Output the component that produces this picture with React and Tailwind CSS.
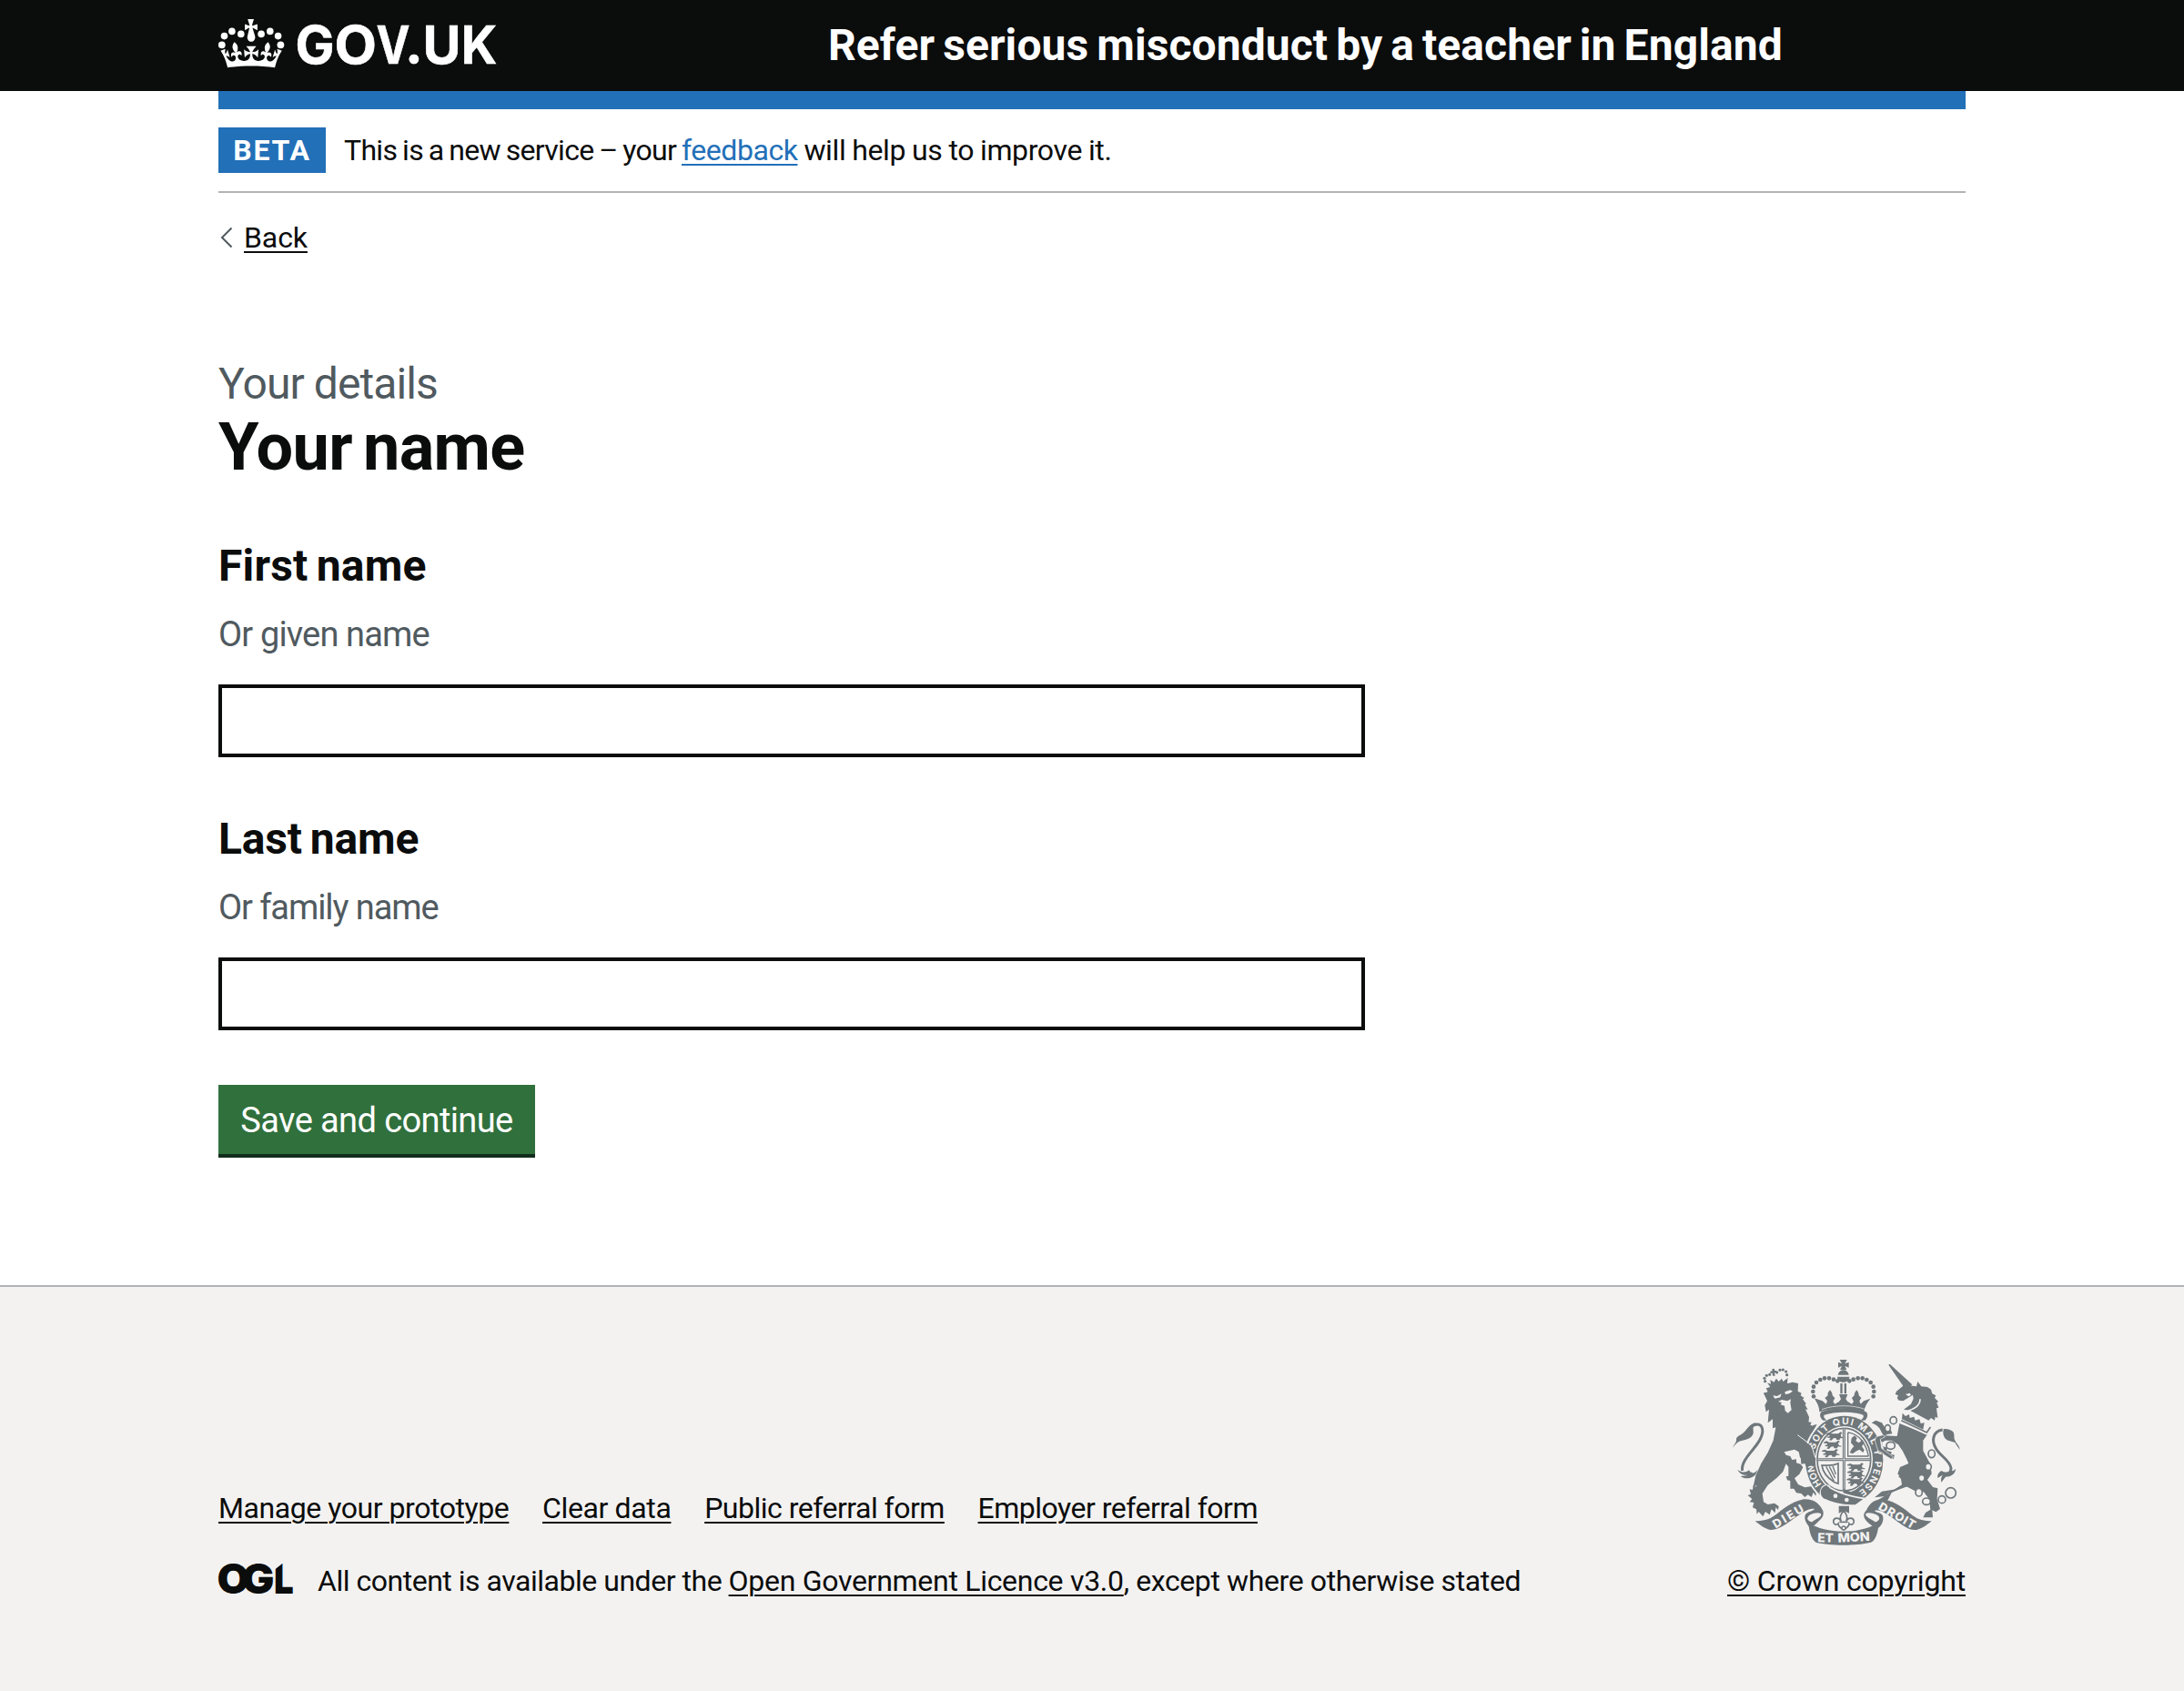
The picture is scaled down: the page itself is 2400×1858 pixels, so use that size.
import React from "react";

function Crown() {
  return (
    <g fill="#fff">
      <circle cx="3.8" cy="49.3" r="3.9" />
      <circle cx="6.5" cy="39.6" r="3.8" />
      <circle cx="14.9" cy="34.4" r="3.8" />
      <circle cx="24.8" cy="37.4" r="3.8" />
      <circle cx="47.1" cy="37.4" r="3.8" />
      <circle cx="56.8" cy="34.4" r="3.8" />
      <circle cx="65.6" cy="39.6" r="3.8" />
      <circle cx="68.4" cy="49.3" r="3.9" />
      <path d="M37.6 30.6l5.3 2.7v-6.7l-5.3 1.6-.6-.6 2-6.6h-6.8l2 6.6-.6.6-4.5-1.6v6.7l4.5-2.7.4.5-2 8.3c-.9 3 1.1 6.4 4 6.4s5.1-3 4.2-6.4l-2.6-8.3z" />
      <g transform="translate(2.4 10.6) scale(1.06)">
        <path d="M37,37.9s-3.4,3.8-4.1,6.1c2.2,0,4.2-.5,6.4-2.8l-.7,8.5c-2-2.8-4.4-4.1-5.7-3.8.1,3.1.5,6.7,5.8,7.2,3.7.3,6.7-1.5,7-3.8.4-2.6-2-4.3-3.7-1.6-1.4-4.5,2.4-6.1,4.9-3.2-1.9-4.5-1.8-7.7,2.4-10.9,3,4,2.6,7.3-1.2,11.1,2.4-1.3,6.2,0,4,4.6-1.2-2.8-3.7-2.2-4.2.2-.3,1.7.7,3.7,3,4.2,1.9.3,4.7-.9,7-5.9-1.3,0-2.4.7-3.9,1.7l2.4-8c.6,2.3,1.4,3.7,2.2,4.5.6-1.6.5-2.8,0-5.3l5,1.8c-2.6,3.6-5.2,8.7-7.3,17.5-7.4-1.1-15.7-1.7-24.5-1.7h0c-8.8,0-17.1.6-24.5,1.7-2.1-8.9-4.7-13.9-7.3-17.5l5-1.8c-.5,2.5-.6,3.7,0,5.3.8-.8,1.6-2.3,2.2-4.5l2.4,8c-1.5-1-2.6-1.7-3.9-1.7,2.3,5,5.2,6.2,7,5.9,2.3-.4,3.3-2.4,3-4.2-.5-2.4-3-3.1-4.2-.2-2.2-4.6,1.6-6,4-4.6-3.7-3.7-4.2-7.1-1.2-11.1,4.2,3.2,4.3,6.4,2.4,10.9,2.5-2.8,6.3-1.3,4.9,3.2-1.8-2.7-4.1-1-3.7,1.6.3,2.3,3.3,4.1,7,3.8,5.4-.5,5.7-4.2,5.8-7.2-1.3-.2-3.7,1-5.7,3.8l-.7-8.5c2.2,2.3,4.2,2.7,6.4,2.8-.7-2.3-4.1-6.1-4.1-6.1h10.6" />
      </g>
    </g>
  );
}

function Logo() {
  return (
    <svg className="block h-[100px] w-[310px]" viewBox="0 0 310 100" aria-label="GOV.UK">
      <Crown />
      <g fill="#fff" stroke="#fff" strokeWidth="0.6" className="font-['Inter',sans-serif] text-[58px] font-bold">
        <text x="84.5" y="70" textLength="43" lengthAdjust="spacingAndGlyphs">G</text>
        <text x="127.5" y="70" textLength="46.5" lengthAdjust="spacingAndGlyphs">O</text>
        <text x="173.5" y="70" textLength="37" lengthAdjust="spacingAndGlyphs">V</text>
        <text x="207.4" y="70" className="font-['Lato',sans-serif] text-[62px] font-black">.</text>
        <text x="224.5" y="70" textLength="42" lengthAdjust="spacingAndGlyphs">U</text>
        <text x="266.8" y="70" textLength="39.5" lengthAdjust="spacingAndGlyphs">K</text>
      </g>
    </svg>
  );
}

function OglLogo() {
  return (
    <svg className="block h-[36px] w-[82px] overflow-visible" viewBox="0 0 82 36" aria-label="OGL">
      <g fill="#0b0c0c" className="font-['Inter',sans-serif] text-[45px] font-black">
        <text x="-1.4" y="33.9" textLength="35.8" lengthAdjust="spacingAndGlyphs">O</text>
        <text x="25.6" y="33.9" textLength="36" lengthAdjust="spacingAndGlyphs">G</text>
        <text x="61" y="33.9" textLength="21.7" lengthAdjust="spacingAndGlyphs">L</text>
      </g>
      <path d="M62 0h9.5L62 7.5z" fill="#f3f2f1" />
    </svg>
  );
}

const G = "#6f777b";
const BG = "#f3f2f1";

const crownDots = [
  [339, 163], [337, 147], [339, 131], [348, 117], [361, 108], [375, 103], [390, 103], [405, 107], [418, 112],
];

function LionCharge({ x, y }) {
  return (
    <path
      transform={`translate(${x} ${y})`}
      d="M-8 2l10-4 8 4h22l8-6 6 4-6 4 2 8 8 2v3l-10-1-4 6h-9l-3-6-8 1-6 7-8-1 5-8-9 1-2-4 8-2-1-4-11-1z"
    />
  );
}

function Crest() {
  return (
    <svg className="block h-[204px] w-[250px]" viewBox="72 42 750 612" aria-label="Royal coat of arms">
      <defs>
        <path id="motto" d="M339 373 A101 117 0 1 1 484 478" />
        <path id="honi" d="M375 463 A101 117 0 0 1 339 373" />
      </defs>

      {/* lion */}
      <g fill={G}>
        <path d="M174 152l14-4-6-12 88-20 18 4-1 26 12 6-3 8 12 8-5 4 12 16-5 1 10 18-8-2 12 26-2 24 22 8-18 38-8 20-16-6 14 12 12 8 20 40-2 16 8 18-8-6-2 12-8-10-6 8-4-12-6 4 0-12-12-4-2-14-10 2 0-12-12 2-6-12-20-6 28-8-24 0 10 20 24 14 8 22-12 22-16 14 12 20 22 10 24-4 16 8 8 12-10-4-2 16-8-12-6 16-12-8-10 8-12-12-16-2-8-14-12 0 0-26-10-2-4-12 8-2 0-30-8-10-10 26-20 20-30 24-18 28 4 28 14 8 22-4 14 10-2 12-8-8-2 18-12-12-6 18-14-10-8 16-14-16-6 8-2-16-12-6 4-16-14-2 8-10-14-12 10-4-4-16 10 2 2-16 8 6 10-12 16 2 12-36 24-36 16-56 18-42-28-2 18-10-22-6 12-16-16-4 12-18-10-4 10-14z" />
        <path d="M174 152l12 26-8 14 4 22 10-8-4 44 16-12 0 30 60-20-10-86-30-20z" />
        <path d="M204 240l10 26-8 42-18 40-22 36-18 40-8 36 40-10 34-40 8-26 0-22 18-12 28-4 34 4 40 22-14-44-18-28 22-52z" />
        <path d="M98 426c20 0 30-6 34-14 6 6 14 4 22-8-2 12-8 20-16 24-12 6-28 8-40-2zM88 404c12 10 26 12 38 2l8 12c-16 8-36 6-46-14z" />
        <path d="M72 332c6-14 14-18 12-30 4-10 20-12 32-28 8-10 16-22 34-25-16 16-8 22-10 36-4 16-22 20-38 24-12 2-20 10-30 23z" />
      </g>
      <path d="M120 280c12-22 38-34 48-16 8 18-6 46-26 70-20 26-42 48-38 74" fill="none" stroke={G} strokeWidth="9" />
      <path d="M205 160l14 2 14-8-4 12-18 4zM244 148l18-6 8 4-12 8-12 2zM222 180l12-6 18 4 12-6-2 12 4 24-12 10-9-8-2-16-13-4 4-7z" fill={BG} />
      <path d="M242 346l34-8 14 8 4 18 14 20-2 14-10-12-14-4 0-12-14 2-6-12-14-4z" fill={BG} />
      {/* lion's crown */}
      <path d="M186 118l12 4-2-14 12 8 8-12 8 10 10-10 4 10 16-12-2 16-52 20zM190 134l62-18 2 8-62 18z" fill={G} />
      <path d="M202 72h8v6h7v7h-7l2 10h-8l-1-9-7 1v-7l7-1z" fill={G} />
      <g fill={G}>
        {[[179, 113], [177, 103], [184, 94], [194, 91], [218, 84], [228, 76], [238, 75], [248, 81], [251, 92]].map(([x, y]) => (
          <circle key={x} cx={x} cy={y} r="4.8" />
        ))}
      </g>

      {/* unicorn */}
      <g fill={G}>
        <path d="M586 59l4-3 74 68-22 16z" />
        <path d="M650 124l14 4 14 2 4-16 12 16 20 2 12 8 4 14 12 6-4 8 12 12-5 4 6 16-7 2 4 32-8-4-2 12-12-8-8 8-60-32-22-4 24-18 8-18-2-12-16 10-16 10-14-2-6-8 4-8-10-4 4-10 20-16 14-16z" />
        <path d="M622 252l92 36-14 20 0 34 24 44 4 32-14 20 18 24 16 4-2 36 10 32-14 10-12-6 2 24-18 0-14 0 8-16 16-10-4-34-18-24-30-4-30-16-46 22-12 24-42 12 6-10 24-14 18-12 40-26-4-24-10-12 8-22 28-12-6-14-14-28-14-20-22-14-20 0-12 6 4 14 14 4-2 10 16 4-2 8 12 2-4 14-16-10-26-16-8-34-10-6 28-12 44 2z" />
        <path d="M618 426l28 28-44 16-38 6-24 20 34-4 12-10 62-22 40-20-10-30z" />
        <path d="M530 250l14-8 20 8 14 22 16 2 4 12-16 2-12 6-14-26-10-10z" />
        <path d="M820 340c-4-12-12-16-14-24-14-6-30-6-36-18-4-10-6-18-2-26-8-2-18 4-22 10 10-14 34-16 48-6 14 8 4 22 12 34 4 10 16 16 14 30zM808 402c-4 18-16 26-34 26l-14 18c-2-12 0-16 4-24l-16 10c-2-14 6-20 12-24 6 6 30 8 48-6z" />
      </g>
      <path d="M764 273c-34 5-36 37-22 61 12 24 48 40 50 66 0 14-8 20-20 22" fill="none" stroke={G} strokeWidth="9" />
      <path d="M690 172c0 22-18 32-50 42" fill="none" stroke={BG} strokeWidth="5" />
      <path d="M642 156l14-4 4 6-8 5zM606 187l14-4-6 6z" fill={BG} />
      {/* collar */}
      <path d="M630 214l96 46-14 30-92-42z" fill={BG} />
      <path d="M628 242l84 40 12-18" fill="none" stroke={G} strokeWidth="5" />
      <path d="M630 238l2-20 10 10 12-6 2 12 14-4 4 12 14-4 4 14 12-2-4 22z" fill={G} />
      {/* chain */}
      <g fill={BG} stroke={G} strokeWidth="5">
        <ellipse cx="602" cy="242" rx="11" ry="12" />
        <ellipse cx="583" cy="268" rx="9" ry="11" />
        <ellipse cx="593" cy="325" rx="14" ry="12" />
        <ellipse cx="728" cy="352" rx="11" ry="13" />
        <ellipse cx="717" cy="395" rx="10" ry="11" />
        <ellipse cx="695" cy="432" rx="10" ry="11" />
        <ellipse cx="686" cy="479" rx="11" ry="13" />
        <ellipse cx="711" cy="509" rx="13" ry="11" />
        <ellipse cx="762" cy="503" rx="12" ry="12" />
        <circle cx="791" cy="481" r="17" />
      </g>

      {/* garter and shield */}
      <ellipse cx="440" cy="373" rx="134" ry="151" fill={BG} />
      <path d="M330 264c6-6 14-10 20-8l-18 28z" fill={G} />
      <ellipse cx="440" cy="373" rx="128" ry="146" fill={G} />
      <ellipse cx="439" cy="371" rx="95" ry="110" fill={BG} />
      <ellipse cx="439" cy="371" rx="88" ry="103" fill="none" stroke={G} strokeWidth="5" />
      <path d="M439 268v206M352 371h174" stroke={G} strokeWidth="9" fill="none" />
      <path d="M439 268v206M352 371h174" stroke={BG} strokeWidth="2" fill="none" />
      <g fill={G}>
        <LionCharge x={388} y={284} /><LionCharge x={380} y={312} /><LionCharge x={374} y={340} />
        <LionCharge x={458} y={386} /><LionCharge x={458} y={410} /><LionCharge x={456} y={434} />
        <path d="M464 300l10-8 8 8-4 10 10 6 12-10 6 10-8 12 8 12-4 8-12-10-12 6-10 8-10-4 8-14 6-6-10-12z" />
      </g>
      <path d="M452 282v78h68M452 282c34 4 60 34 68 78" fill="none" stroke={G} strokeWidth="4" />
      <path d="M366 390c20 0 34 4 54-6v66l-12-4c-20-12-38-30-42-56z" fill={BG} stroke={G} strokeWidth="5" />
      <path d="M380 394l26 48M391 394l19 38M402 392l10 28" stroke={G} strokeWidth="4" fill="none" />
      <path d="M438 468l24 10c12-4 22-10 30-20l14 18-30 24-40-18z" fill={G} />
      <g fill={BG} className="font-['Inter',sans-serif] text-[31px] font-bold">
        <text>
          <textPath href="#motto" startOffset="34" textLength="430" lengthAdjust="spacing">SOIT QUI MAL Y PENSE</textPath>
        </text>
        <text>
          <textPath href="#honi" startOffset="14">HON</textPath>
        </text>
      </g>
      {/* buckle strap */}
      <path d="M364 470c6-16 24-18 30-6 34 20 72 30 114 36l-30 22c-40 2-76-6-108-22-8-8-12-18-6-30z" fill={G} stroke={BG} strokeWidth="5" />
      <path d="M384 458c-14 2-22 14-18 26 2 10 10 14 16 12" fill="none" stroke={G} strokeWidth="6" />
      <circle cx="411" cy="491" r="7" fill={BG} /><circle cx="448" cy="504" r="7" fill={BG} />

      {/* lion and unicorn paws over the garter */}
      <path d="M286 292l44 34 16 44-6 26-14-8-8 14-8-18-12 2-2-28z" fill={G} />
      <path d="M286 290l46 34 12 40" fill="none" stroke={BG} strokeWidth="3" />
      <path d="M545 296l22-6 8 6-16 8 4 30 38 28-6 8-22-14-8-8-14-6-10-34z" fill={G} stroke={BG} strokeWidth="2" />

      {/* imperial crown */}
      <g fill={G}>
        {crownDots.map(([x, y]) => (
          <React.Fragment key={`${x}-${y}`}>
            <circle cx={x} cy={y} r="7" />
            <circle cx={875 - x} cy={y} r="7" />
          </React.Fragment>
        ))}
        <path d="M425 42h24l-7 13 13-5v18l-13-5 6 12h-22l6-12-12 5V50l12 5z" />
        <path d="M419 92c2-10 10-16 18-16s16 6 18 16zM417 98h40c0 12-10 18-20 18s-20-6-20-18zM427 120h7v34h-7zM440 120h7v34h-7z" />
        <path d="M346 170l22 8 12 10 4-10-8-10 10-8c-2-8 2-12 7-18 5 6 8 10 8 18l8 8-6 12 6 8 14-8 6-8-6-16h28l-6 16 6 8 14 8 6-8-6-12 8-8c0-8 3-12 8-18 4 6 7 10 7 18l8 8-6 10 4 10 10-10 22-8c-10 14-20 28-20 44-46-14-102-14-148 0 0-18-8-30-16-44z" />
        <path d="M364 214c40-16 108-16 148 0 8 8 4 22-4 28h-14c6-6 12-10 8-18-36-12-92-12-128 0-4 8 2 12 8 18h-12c-8-6-14-18-6-28z" />
      </g>
      <path d="M366 206c42-16 102-16 144 0" fill="none" stroke={BG} strokeWidth="2" />

      {/* fleur-de-lis pendant */}
      <path d="M422 524h34v24l-17-8-17 8z" fill={G} />
      <path d="M438 540c-12 14-14 24-8 34-8-14-24-12-26 0 0 12 10 14 16 8 0 10 6 14 18 20 12-6 18-10 18-20 6 6 16 4 16-8-2-12-18-14-26 0 6-10 4-20-8-34z" fill={BG} stroke={G} strokeWidth="5" />
      <path d="M424 577h28" stroke={G} strokeWidth="5" />
      <circle cx="438" cy="597" r="6" fill={BG} stroke={G} strokeWidth="4" />

      {/* ribbon */}
      <g fill={G}>
        <path d="M146 574c22 0 46-4 64-18 28-20 50-44 96-54 34-2 52 14 64 38 6 22-12 30-26 46l-16 10c-14-14-22-30-16-44 8-10 24-10 30-18-18-4-36 10-54 22-28 18-58 48-92 47-20-4-36-18-50-29z" />
        <path d="M728 574c-22 0-44-4-62-18-26-20-50-44-96-54-30-2-46 14-56 34-18 22-6 32 8 46l24 18c20-10 26-32 20-46-8-8-20-8-26-14 20-6 36 10 54 20 28 18 54 46 84 43 20-4 36-18 50-29z" />
        <path d="M322 580c60 38 170 38 232-2-2 28-8 58-26 66-50 12-132 12-182 0-14-10-22-36-24-64z" />
      </g>
      <path d="M352 544c-18 0-34 8-36 20 0 8 8 14 18 16 10-12 34-16 32-28 0-6-6-8-14-8z" fill={BG} stroke={G} strokeWidth="5" />
      <path d="M520 544c18 0 38 8 38 20 0 8-8 14-16 16-12-10-34-16-34-28 0-6 4-8 12-8z" fill={BG} stroke={G} strokeWidth="5" />
      <g fill={BG} className="font-['Inter',sans-serif] font-extrabold">
        <text transform="translate(214 599) rotate(-31)" className="text-[39px]" textLength="112">DIEU</text>
        <text transform="translate(352 643) rotate(1)" className="text-[41px]" textLength="52">ET</text>
        <text transform="translate(419 644) rotate(-3)" className="text-[41px]" textLength="106" lengthAdjust="spacingAndGlyphs">MON</text>
        <text transform="translate(550 534) rotate(30)" className="text-[39px]" textLength="134">DROIT</text>
      </g>
    </svg>
  );
}

function Field({ id, label, hint, labelClass, hintClass }) {
  return (
    <div className="flex flex-col">
      <label htmlFor={id} className={`text-[48px] leading-[60px] font-bold ${labelClass}`}>{label}</label>
      <div className={`mt-5 text-[38px] leading-[50px] text-[#505a5f] ${hintClass}`}>{hint}</div>
      <input id={id} type="text" className="mt-[30px] h-20 w-[1260px] border-4 border-[#0b0c0c] bg-white px-2 text-[38px] outline-none" />
    </div>
  );
}

const link = "underline decoration-2 underline-offset-[4px]";

const footerLinks = [
  { text: "Manage your prototype", cls: "tracking-[-0.44px]" },
  { text: "Clear data", cls: "tracking-[-0.37px]" },
  { text: "Public referral form", cls: "tracking-[-0.5px]" },
  { text: "Employer referral form", cls: "tracking-[-0.5px]" },
];

export default function App() {
  return (
    <div className="flex min-h-[1858px] w-[2400px] flex-col bg-white font-['Roboto',sans-serif] text-[#0b0c0c]">
      <header className="h-[100px] bg-[#0b0c0c]">
        <div className="mx-auto flex w-[1920px] items-start">
          <Logo />
          <div className="ml-[360px] pt-5 text-[48px] leading-[60px] font-bold tracking-[0.08px] [word-spacing:-3px] whitespace-nowrap text-white">
            Refer serious misconduct by a teacher in England
          </div>
        </div>
      </header>

      <div className="mx-auto w-[1920px]">
        <div className="h-5 bg-[#2270b8]" />
        <div className="flex h-[92px] items-center border-b-2 border-[#b1b4b6] text-[32px] leading-10">
          <strong className="flex h-[50px] w-[118px] items-center justify-center bg-[#2270b8] font-bold tracking-[1.8px] text-white">BETA</strong>
          <p className="ml-5 whitespace-pre">
            <span className="tracking-[-0.68px] [word-spacing:-1.5px]">This is a new service – your </span>
            <a href="#" className={`text-[#2270b8] tracking-[-0.45px] ${link}`}>feedback</a>
            <span className="tracking-[-0.38px] [word-spacing:-0.6px]"> will help us to improve it.</span>
          </p>
        </div>
        <a href="#" className="mt-[29px] flex w-max items-center text-[32px] leading-10 tracking-[-0.1px]">
          <svg className="mr-3 ml-[2px] block h-6 w-[14px]" viewBox="0 0 14 24" fill="none" stroke="#505a5f" strokeWidth="2">
            <path d="M12.5 1.5L2 12l10.5 10.5" />
          </svg>
          <span className={link}>Back</span>
        </a>

        <main className="flex flex-col items-start pt-[111px]">
          <span className="text-[48px] leading-[60px] tracking-[-0.9px] text-[#505a5f]">Your details</span>
          <h1 className="text-[72px] leading-[80px] font-bold tracking-[-0.7px] [word-spacing:-5px]">Your name</h1>
          <form className="mt-[60px] flex flex-col items-start gap-[60px]">
            <Field id="first" label="First name" hint="Or given name" labelClass="tracking-[0.2px] [word-spacing:-3px]" hintClass="tracking-[-0.85px]" />
            <Field id="last" label="Last name" hint="Or family name" labelClass="tracking-[-0.15px] [word-spacing:-3px]" hintClass="tracking-[-1.08px]" />
            <button type="button" className="h-20 w-[348px] border-b-4 border-[#112c1c] bg-[#30703c] pt-[2px] text-[38px] leading-[74px] tracking-[-0.6px] whitespace-nowrap text-white">
              Save and continue
            </button>
          </form>
        </main>
      </div>

      <footer className="mt-[140px] flex-1 border-t-2 border-[#b1b4b6] bg-[#f3f2f1]">
        <div className="mx-auto flex w-[1920px] items-end justify-between pt-20 text-[32px] leading-10">
          <div className="flex flex-col gap-10">
            <ul className="flex gap-[36.7px]">
              {footerLinks.map((l) => (
                <li key={l.text}><a href="#" className={`${l.cls} ${link}`}>{l.text}</a></li>
              ))}
            </ul>
            <div className="flex items-start">
              <OglLogo />
              <p className="ml-[27px] whitespace-pre">
                <span className="tracking-[-0.48px]">All content is available under the </span>
                <a href="#" className={`tracking-[-0.29px] ${link}`}>Open Government Licence v3.0</a>
                <span className="tracking-[-0.39px]">, except where otherwise stated</span>
              </p>
            </div>
          </div>
          <div className="flex flex-col items-end">
            <div className="mr-[6px]"><Crest /></div>
            <a href="#" className={`mt-[19px] tracking-[-0.18px] ${link}`}>© Crown copyright</a>
          </div>
        </div>
      </footer>
    </div>
  );
}
